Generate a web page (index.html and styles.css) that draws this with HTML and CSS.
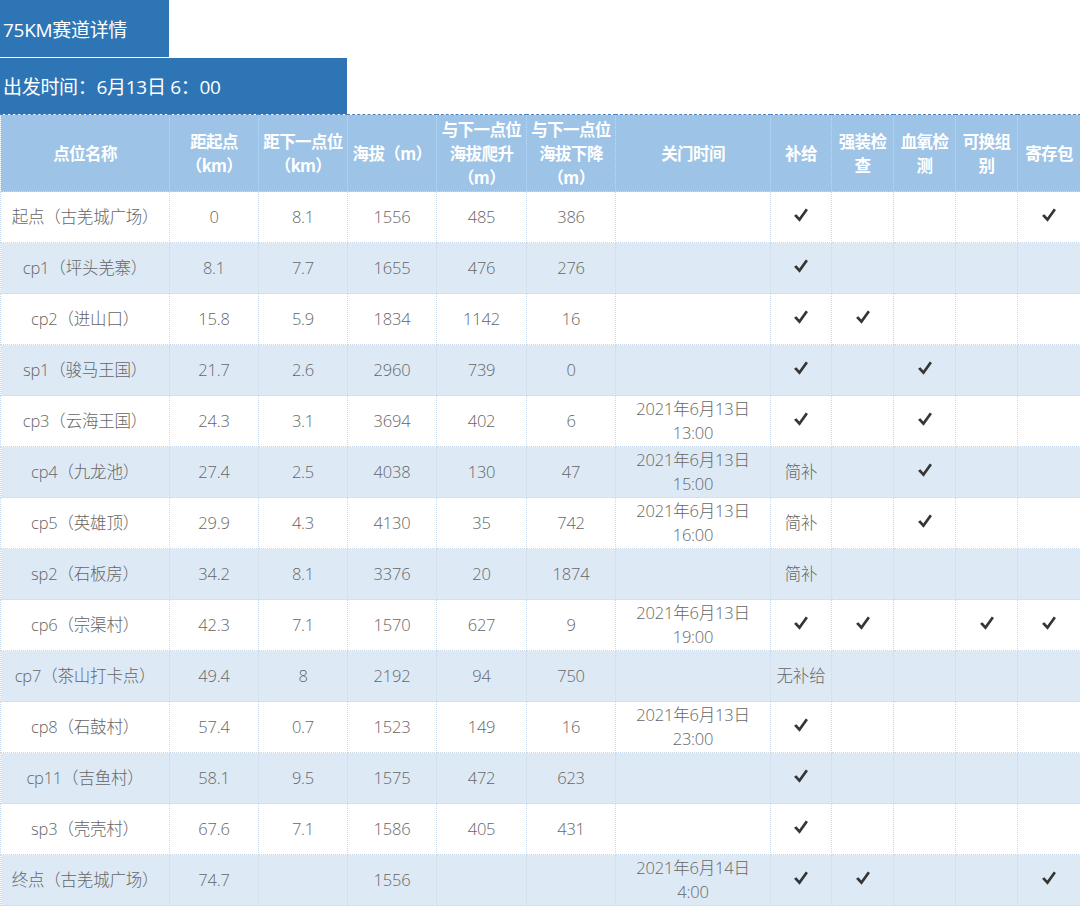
FILE: index.html
```html
<!DOCTYPE html>
<html lang="zh">
<head>
<meta charset="utf-8">
<title>75KM赛道详情</title>
<link rel="stylesheet" href="styles.css">
</head>
<body>
<div class="titles">
  <div class="title-box title-main">75KM赛道详情</div>
  <div class="title-box title-start">出发时间：6月13日 6：00</div>
</div>
<table class="course">
  <colgroup>
    <col class="c-name"><col class="c-n"><col class="c-n"><col class="c-n"><col class="c-n5"><col class="c-n">
    <col class="c-time"><col class="c-s1"><col class="c-s"><col class="c-s"><col class="c-s"><col class="c-s2">
  </colgroup>
  <thead>
    <tr>
      <th>点位名称</th>
      <th>距起点<br>（km）</th>
      <th>距下一点位<br>（km）</th>
      <th>海拔（m）</th>
      <th>与下一点位<br>海拔爬升<br>（m）</th>
      <th>与下一点位<br>海拔下降<br>（m）</th>
      <th>关门时间</th>
      <th>补给</th>
      <th>强装检<br>查</th>
      <th>血氧检<br>测</th>
      <th>可换组<br>别</th>
      <th>寄存包</th>
    </tr>
  </thead>
  <tbody id="rows"></tbody>
</table>
<script src="app.js"></script>
</body>
</html>
```
FILE: app.js
```js
var C = 'C';
var data = [
  ['起点（古羌城广场）','0','8.1','1556','485','386','',C,'','','',C],
  ['cp1（坪头羌寨）','8.1','7.7','1655','476','276','',C,'','','',''],
  ['cp2（进山口）','15.8','5.9','1834','1142','16','',C,C,'','',''],
  ['sp1（骏马王国）','21.7','2.6','2960','739','0','',C,'',C,'',''],
  ['cp3（云海王国）','24.3','3.1','3694','402','6','2021年6月13日|13:00',C,'',C,'',''],
  ['cp4（九龙池）','27.4','2.5','4038','130','47','2021年6月13日|15:00','简补','',C,'',''],
  ['cp5（英雄顶）','29.9','4.3','4130','35','742','2021年6月13日|16:00','简补','',C,'',''],
  ['sp2（石板房）','34.2','8.1','3376','20','1874','','简补','','','',''],
  ['cp6（宗渠村）','42.3','7.1','1570','627','9','2021年6月13日|19:00',C,C,'',C,C],
  ['cp7（茶山打卡点）','49.4','8','2192','94','750','','无补给','','','',''],
  ['cp8（石鼓村）','57.4','0.7','1523','149','16','2021年6月13日|23:00',C,'','','',''],
  ['cp11（吉鱼村）','58.1','9.5','1575','472','623','',C,'','','',''],
  ['sp3（壳壳村）','67.6','7.1','1586','405','431','',C,'','','',''],
  ['终点（古羌城广场）','74.7','','1556','','','2021年6月14日|4:00',C,C,'','',C]
];
var check = '<svg class="check" viewBox="0 0 16 16" width="16" height="16" aria-hidden="true"><path d="M1 8.8 L3.4 7.2 L6.3 10.5 L12.8 1.4 L15 2.9 L6.6 14.8 Z" fill="#363636"/></svg>';
var tb = document.getElementById('rows');
var html = '';
data.forEach(function (r) {
  html += '<tr>';
  r.forEach(function (v) {
    if (v === C) {
      html += '<td>' + check + '</td>';
    } else {
      html += '<td>' + v.replace('|', '<br>') + '</td>';
    }
  });
  html += '</tr>';
});
tb.innerHTML = html;
```
FILE: styles.css
```css
html, body {
  margin: 0;
  padding: 0;
  background: #ffffff;
}
body {
  width: 1080px;
  height: 906px;
  overflow: hidden;
  font-family: "Open Sans", "Noto Sans CJK SC", sans-serif;
}
.titles {
  display: flex;
  flex-direction: column;
  gap: 1px;
}
.title-box {
  background: #2e75b6;
  color: #ffffff;
  font-size: 19px;
  display: flex;
  align-items: center;
  padding-left: 3px;
  box-sizing: border-box;
  font-family: "Open Sans", "Noto Sans CJK SC", sans-serif;
  letter-spacing: -0.3px;
}
.title-main {
  width: 169px;
  height: 57px;
}
.title-start {
  width: 347px;
  height: 56px;
}
.course {
  width: 1080px;
  table-layout: fixed;
  border-collapse: collapse;
  border-top: 1px dashed #4a82bf;
}
.c-name { width: 169px; }
.c-n { width: 89px; }
.c-n5 { width: 90px; }
.c-time { width: 155px; }
.c-s1 { width: 61px; }
.c-s { width: 62px; }
.c-s2 { width: 63px; }
.course th {
  background: #9dc3e6;
  color: #ffffff;
  font-family: "Noto Sans CJK SC", sans-serif;
  font-weight: 700;
  font-size: 16.5px;
  line-height: 24px;
  height: 76px;
  padding: 0;
  border: 1px dotted #c3d8ee;
  letter-spacing: -0.6px;
  white-space: nowrap;
}
.course td {
  height: 50px;
  padding: 0;
  text-align: center;
  font-size: 16.5px;
  line-height: 24px;
  color: #666666;
  font-weight: 300;
  border: 1px dotted #c8d9ea;
  white-space: nowrap;
  letter-spacing: -0.2px;
}
.course tbody tr:nth-child(even) td {
  background: #ddeaf6;
}
.check {
  display: block;
  margin: -4px auto 0;
}
```
